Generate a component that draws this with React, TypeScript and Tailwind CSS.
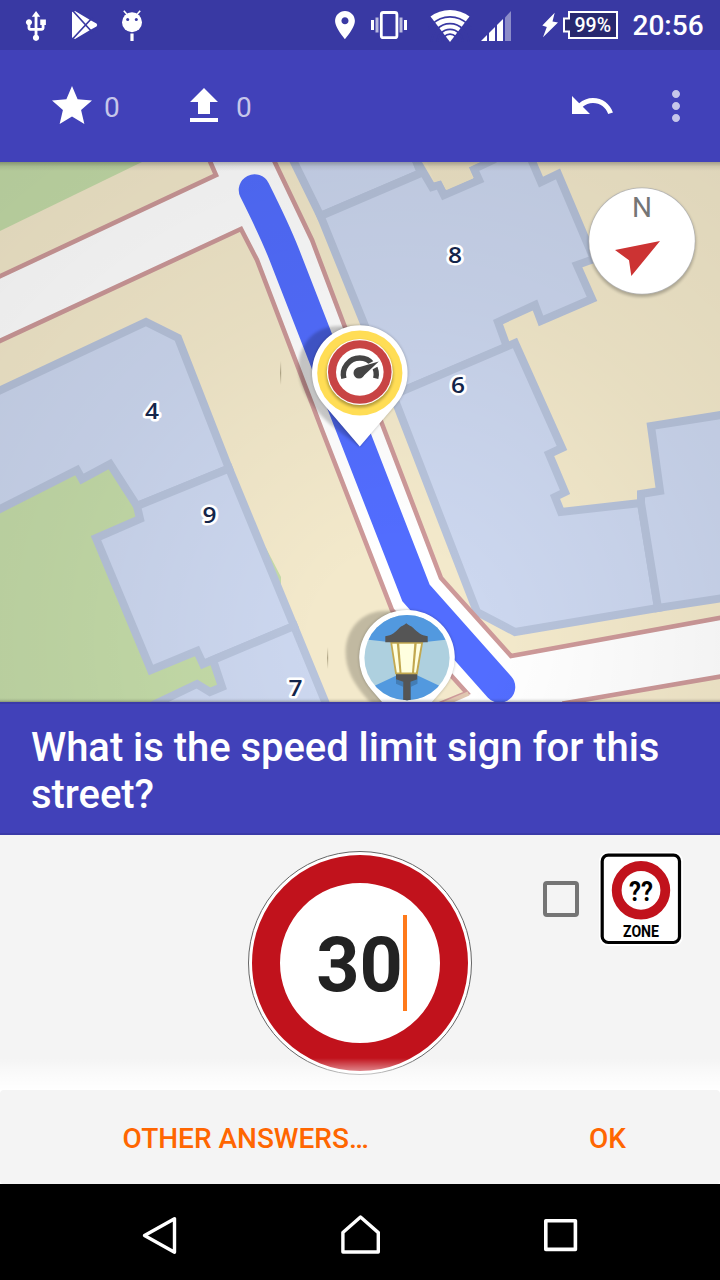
import React from "react";

const WALL = "#b7c3db";
const ROOF = "#ccd7ef";
const CURB = "#cd9999";

const buildings: string[] = [
  "293,160 320.5,216 421,173 412,150 289,150",
  "320.5,216 421,173 415,158 432,187 439,185 444,195 479,180 474,169 493,160 515,145 525,145 541,182 558,174 594,259 577,265 592,299 541,321 535,305 498,322 507,347 393,395",
  "393,395 515,343 562,448 549,454 565,492 555,497 561,512 641,503 658,608 515,632 477,612",
  "730,413.5 651,426 660,491 641,494 641,503 658,608 730,597",
  "-10,395 146,322 178,338 229,468.5 137,506 110,464 82,479 77,470 -10,514",
  "137,506 229,468.5 294,626 203,664 197,651 151,670 96,538 140,519",
  "213,660 294,626 331,716 130,716 197,684 210,692 222,687",
];

const houseNumbers = [
  { n: "8", x: 455, y: 263 },
  { n: "6", x: 458, y: 393.3 },
  { n: "4", x: 152, y: 418.5 },
  { n: "9", x: 209.5, y: 523 },
  { n: "7", x: 295.5, y: 696 },
];

function PinBody() {
  return (
    <>
      <path
        d="M0 73 C-16 62 -42 46 -56 18 C-70 -12 -56 -47 -20 -47 L6 -46 Z"
        fill="#000"
        opacity="0.2"
        filter="url(#soft)"
      />
      <path
        d="M0 73.5 L-35.5 32 A47.8 47.8 0 1 1 35.5 32 Z"
        fill="#000"
        opacity="0.25"
        filter="url(#soft)"
      />
      <path d="M0 73.5 L-35.5 32 A47.8 47.8 0 1 1 35.5 32 Z" fill="#fff" />
    </>
  );
}

function SpeedPin() {
  return (
    <g transform="translate(359.8 373)">
      <PinBody />
      <circle r="42.6" fill="#ffdd55" />
      <circle cy="1" r="33.5" fill="#000" opacity="0.3" filter="url(#soft)" />
      <circle cy="-1" r="33" fill="#fff" />
      <circle cy="-1" r="31.8" fill="#c84444" />
      <circle cy="-1" r="23.8" fill="#fff" />
      <path d="M-15.9 5.4 A16.4 16.4 0 1 1 15.9 5.4" fill="none" stroke="#444" strokeWidth="5.4" />
      <path d="M-1 0 L20 -11.5" stroke="#fff" strokeWidth="7" />
      <path d="M-3.5 -5 L19 -11.6 L2.5 4 Z" fill="#444" />
      <circle cx="-0.8" cy="0" r="5.5" fill="#444" />
    </g>
  );
}

function LampPin() {
  return (
    <g transform="translate(407 657.7)">
      <PinBody />
      <circle r="42.6" fill="#aed0df" />
      <g clipPath="url(#lampDisc)">
        <path d="M-44 -18.5 L-16 -15.5 H16 L44 -18.5 V-50 H-44 Z" fill="#5299df" />
        <path d="M-44 33.5 L-10 17.5 H10 L44 33.5 V50 H-44 Z" fill="#5299df" />
        <path d="M-11 19 H10.5 V24 L4 27 V45 H-4 V27 L-11 24 Z" fill="#000" opacity="0.18" transform="translate(0 2)" />
        <path d="M-11 16 H10.3 V21.5 L3.5 24 V44 H-3.7 V24 L-11 21.5 Z" fill="#555" />
      </g>
      <path d="M-16.8 -16 H16.2 L10.7 16.5 H-11.8 Z" fill="#c2a850" />
      <path d="M-14.7 -14 H-10.2 L-7.5 14.8 H-10.2 Z" fill="#ffffdf" />
      <path d="M-7.8 -14 H7.3 L5 14.8 H-5.5 Z" fill="#ffffdf" />
      <path d="M9.7 -14 H14 L9 14.8 H7 Z" fill="#ffffdf" />
      <path
        d="M-0.7 -34.5 C2 -32 4 -32 6 -30 C11 -25 14 -22.5 20.7 -21.5 V-15.5 H-21.7 V-21.5 C-15 -22.5 -12 -25 -7.5 -30 C-5.5 -32 -3.5 -32 -0.7 -34.5 Z"
        fill="#555"
      />
    </g>
  );
}

function MapView() {
  return (
    <svg className="block h-full w-full" viewBox="0 162 720 540">
      <defs>
        <radialGradient id="vignette" gradientUnits="userSpaceOnUse" cx="400" cy="640" r="700">
          <stop offset="0.12" stopColor="#000" stopOpacity="0" />
          <stop offset="0.5" stopColor="#000" stopOpacity="0.052" />
          <stop offset="1" stopColor="#000" stopOpacity="0.1" />
        </radialGradient>
        <linearGradient id="topShade" x1="0" x2="0" y1="0" y2="1">
          <stop offset="0" stopColor="#000" stopOpacity="0.26" />
          <stop offset="0.5" stopColor="#000" stopOpacity="0.07" />
          <stop offset="1" stopColor="#000" stopOpacity="0" />
        </linearGradient>
        <linearGradient id="tick" x1="0" x2="0" y1="0" y2="1">
          <stop offset="0" stopColor="#6b6040" stopOpacity="0" />
          <stop offset="0.5" stopColor="#6b6040" stopOpacity="0.5" />
          <stop offset="1" stopColor="#6b6040" stopOpacity="0" />
        </linearGradient>
        <filter id="soft" x="-30%" y="-30%" width="160%" height="160%">
          <feGaussianBlur stdDeviation="1.6" />
        </filter>
        <clipPath id="lampDisc">
          <circle r="42.6" />
        </clipPath>
      </defs>
      <rect y="162" width="720" height="540" fill="#f3e9cb" />
      <polygon points="0,162 142,162 0,231" fill="#c4dca8" />
      <polygon points="0,500 110,460 145,520 250,540 266,548 281,577 281,584 240,660 215,720 0,720" fill="#c4dba8" />
      {buildings.map((points) => (
        <polygon key={points} points={points} fill={ROOF} stroke={WALL} strokeWidth="8" />
      ))}
      <polygon points="425.5,158 434.5,182 441,180 446.5,190 473,178.5 468.5,167.5 489,158" fill="#f0e6c8" />
      <path
        d="M-10 281 L216 175 L205 150 H269 L312 240 L343 322 L441 578 L511 656 L730 616 V675 L560 704 H440 L467 693 L392 610 L322 430 L257 260 L241 229 L-10 345.5 Z"
        fill="#fff"
        stroke={CURB}
        strokeWidth="4.6"
      />
      <path d="M467 693.5 L444 703.5 L452 706 L480 706 Z" fill="#fff" />
      <path d="M468.5 693.5 L444 704" stroke="#e0c6b0" strokeWidth="4.5" />
      <path d="M477 695 L480 702 H559 L553 699 Z" fill="#fff" />
      <path d="M470 702 H562" stroke="#fff" strokeWidth="6" />
      <path
        d="M254.5 190 C266 213 275 231 284 254 L416 593 L499.5 687"
        fill="none"
        stroke="#526dff"
        strokeWidth="31.5"
        strokeLinecap="round"
      />
      <rect y="162" width="720" height="540" fill="url(#vignette)" />
      <rect x="280" y="361" width="1.2" height="24" fill="url(#tick)" />
      <rect x="327" y="647" width="1.2" height="22" fill="url(#tick)" />
      {houseNumbers.map((h) => (
        <text
          key={h.n}
          x={h.x}
          y={h.y}
          textAnchor="middle"
          fontSize="21.5"
          textLength="14"
          lengthAdjust="spacingAndGlyphs"
          fill="#14254a"
          stroke="#fff"
          strokeWidth="5"
          strokeLinejoin="round"
          paintOrder="stroke"
          className="font-['Open_Sans',sans-serif] font-semibold"
        >
          {h.n}
        </text>
      ))}
      <LampPin />
      <SpeedPin />
      <circle cx="642" cy="243" r="54" fill="#000" opacity="0.24" filter="url(#soft)" />
      <circle cx="642" cy="241" r="53.5" fill="#b4b4b4" />
      <circle cx="642" cy="241" r="52.8" fill="#fff" />
      <text x="642" y="217" textAnchor="middle" fontSize="28" fill="#757575" className="font-[Roboto,sans-serif]">
        N
      </text>
      <path d="M615 250 L660 241 L631.3 276 L629 260.3 Z" fill="#cc3333" />
      <rect y="162" width="720" height="9" fill="url(#topShade)" />
      <rect y="698" width="720" height="4" fill="url(#topShade)" transform="rotate(180 360 700)" />
    </svg>
  );
}

function StatusBar() {
  return (
    <div className="flex h-[50px] shrink-0 items-center bg-[#3939a3] text-white">
      <svg className="ml-6 h-[34px] w-6" viewBox="24 8 24 34" fill="#fff">
        <path
          transform="translate(19.1 9.6) scale(1.41)"
          d="M15 7v4h1v2h-3V5h2l-3-4-3 4h2v8H8v-2.07c.7-.37 1.2-1.08 1.2-1.93 0-1.21-.99-2.2-2.2-2.2-1.21 0-2.2.99-2.2 2.2 0 .85.5 1.56 1.2 1.93V13c0 1.11.89 2 2 2h3v3.05c-.71.37-1.2 1.1-1.2 1.95 0 1.22.99 2.2 2.2 2.2 1.21 0 2.2-.98 2.2-2.2 0-.85-.49-1.58-1.2-1.95V15h3c1.11 0 2-.89 2-2v-2h1V7h-4z"
        />
      </svg>
      <svg className="ml-[22px] h-[34px] w-7" viewBox="70 8 28 34">
        <path d="M72 12 L75 11 L91 20.5 L96.5 23.5 Q98 25 96.5 26.5 L91 29.5 L75 39 L72 37.5 Z" fill="#fff" />
        <path d="M73 11 L92.5 32.5 M73 38.5 L92.5 17.5" stroke="#3939a3" strokeWidth="1.7" />
      </svg>
      <svg className="ml-[22px] h-[34px] w-6" viewBox="120 8 24 34">
        <path d="M123.8 10.8 L128 15.5 M140.2 10.8 L136 15.5" stroke="#fff" strokeWidth="1.6" />
        <ellipse cx="132" cy="22.3" rx="10" ry="10" fill="#fff" />
        <circle cx="127.7" cy="19.5" r="1.5" fill="#3939a3" />
        <circle cx="136.3" cy="19.5" r="1.5" fill="#3939a3" />
        <rect x="130.4" y="33.5" width="3.2" height="7.5" fill="#fff" />
      </svg>
      <svg className="ml-[188px] h-[34px] w-[26px]" viewBox="332 8 26 34" fill="#fff">
        <path
          transform="translate(328 8.1) scale(1.415)"
          d="M12 2C8.13 2 5 5.13 5 9c0 5.25 7 13 7 13s7-7.75 7-13c0-3.87-3.13-7-7-7zm0 9.5c-1.38 0-2.5-1.12-2.5-2.5s1.12-2.5 2.5-2.5 2.5 1.12 2.5 2.5-1.12 2.5-2.5 2.5z"
        />
      </svg>
      <svg className="ml-3 h-[34px] w-10" viewBox="370 8 40 34" fill="#fff">
        <rect x="381.3" y="12.5" width="15.6" height="25.2" rx="2" fill="none" stroke="#fff" strokeWidth="2.8" />
        <rect x="371" y="20" width="3" height="10" />
        <rect x="404" y="20" width="3" height="10" />
        <rect x="375.5" y="17.5" width="3" height="15" opacity="0.65" />
        <rect x="399.5" y="17.5" width="3" height="15" opacity="0.65" />
      </svg>
      <svg className="ml-[18px] h-[34px] w-11" viewBox="428 8 44 34">
        <path d="M450 42 L430.5 16.5 A32.2 32.2 0 0 1 469.5 16.5 Z" fill="#fff" />
        <g fill="none" stroke="#3939a3" strokeWidth="1.8">
          <circle cx="450" cy="42" r="25.2" />
          <circle cx="450" cy="42" r="18.4" />
          <circle cx="450" cy="42" r="12.6" />
          <circle cx="450" cy="42" r="7.8" />
        </g>
      </svg>
      <svg className="ml-2 h-[34px] w-8" viewBox="480 8 32 34" fill="#fff">
        <path d="M481 41 L487 35 V41 Z" />
        <path d="M489 41 V33 L495 27 V41 Z" />
        <path d="M497 41 V25 L503 19 V41 Z" />
        <path d="M505 41 V17.5 L511 11 V41 Z" opacity="0.42" />
      </svg>
      <svg className="ml-7 h-[34px] w-20" viewBox="540 8 80 34">
        <path d="M554.7 12.7 L552.5 21.5 L558 22.5 L543 37.3 L546.8 27 L542.3 25.5 Z" fill="#fff" />
        <path d="M569 12 H617 V38 H569 V31.5 H564 V18.5 H569 Z" fill="#28286f" stroke="#fff" strokeWidth="2" />
        <text
          x="592.8"
          y="31.8"
          textAnchor="middle"
          fontSize="20"
          textLength="36.5"
          lengthAdjust="spacingAndGlyphs"
          fill="#fff"
          className="font-[Roboto,sans-serif] font-medium"
        >
          99%
        </text>
      </svg>
      <span className="ml-[12.5px] pt-0.5 font-[Roboto,sans-serif] text-[28px] leading-[34px] font-medium">20:56</span>
    </div>
  );
}

function Icon({ d, className = "" }: { d: string; className?: string }) {
  return (
    <svg className={`size-12 ${className}`} viewBox="0 0 24 24" fill="#fff">
      <path d={d} />
    </svg>
  );
}

function Toolbar() {
  return (
    <div className="flex h-28 shrink-0 items-center bg-[#4141b9] pr-5 pl-12 font-[Roboto,sans-serif] text-[28px] text-[#c6c6ea]">
      <button className="flex w-[132px] items-center gap-2">
        <Icon d="M12 17.27L18.18 21l-1.64-7.03L22 9.24l-7.19-.61L12 2 9.19 8.63 2 9.24l5.46 4.73L5.82 21z" />
        <span className="pt-[3px]">0</span>
      </button>
      <button className="flex items-center gap-2">
        <Icon d="M5 20h14v-2H5v2zM5 10h4v6h6v-6h4l-7-7z" />
        <span className="pt-[3px]">0</span>
      </button>
      <button className="mr-9 ml-auto">
        <Icon d="M12.5 8c-2.65 0-5.05.99-6.9 2.6L2 7v9h9l-3.62-3.62c1.39-1.16 3.16-1.88 5.12-1.88 3.54 0 6.55 2.31 7.6 5.5l2.37-.78C21.08 11.03 17.15 8 12.5 8z" />
      </button>
      <button>
        <Icon
          className="opacity-70"
          d="M12 8c1.1 0 2-.9 2-2s-.9-2-2-2-2 .9-2 2 .9 2 2 2zm0 2c-1.1 0-2 .9-2 2s.9 2 2 2 2-.9 2-2-.9-2-2-2zm0 6c-1.1 0-2 .9-2 2s.9 2 2 2 2-.9 2-2-.9-2-2-2z"
        />
      </button>
    </div>
  );
}

function AnswerForm() {
  return (
    <div className="relative flex h-[255px] shrink-0 justify-end bg-[#f4f4f4] pt-4">
      <div className="mr-[71px] flex size-56 items-center justify-center rounded-full border border-[#666] bg-white">
        <div className="flex size-[216px] items-center justify-center rounded-full border-[28px] border-[#c1121c] bg-white">
          <div className="flex items-center pl-[3px]">
            <span className="pt-[3px] font-[Roboto,sans-serif] text-[75.5px] leading-[96px] font-bold text-[#222]">30</span>
            <span className="h-24 w-1 bg-[#ff7a1a]" />
          </div>
        </div>
      </div>
      <div className="mr-[37px] flex items-start">
        <div className="mt-[30px] mr-5 size-9 rounded-[4px] border-4 border-[#757575]" />
        <svg className="mt-[1px] h-[94px] w-[84px]" viewBox="599 852 84 94">
          <rect x="599" y="852" width="84" height="94" rx="9" fill="#fff" />
          <rect x="602.2" y="855.2" width="77.3" height="87.3" rx="6" fill="#fff" stroke="#000" strokeWidth="3.2" />
          <circle cx="641" cy="890.3" r="24.3" fill="#fff" stroke="#c1121c" strokeWidth="9.8" />
          <text
            x="641"
            y="900.5"
            textAnchor="middle"
            fontSize="27"
            textLength="24"
            lengthAdjust="spacingAndGlyphs"
            className="font-[Roboto,sans-serif] font-bold"
          >
            ??
          </text>
          <text
            x="641"
            y="936.7"
            textAnchor="middle"
            fontSize="16.3"
            textLength="36"
            lengthAdjust="spacingAndGlyphs"
            className="font-[Roboto,sans-serif] font-bold"
          >
            ZONE
          </text>
        </svg>
      </div>
      <div className="absolute inset-x-0 bottom-0 h-8 bg-linear-to-b from-white/0 via-white/60 to-white" />
    </div>
  );
}

function NavBar() {
  return (
    <div className="flex h-24 shrink-0 items-center justify-center gap-40 bg-black pt-1.5">
      <svg className="size-10" viewBox="140 1215 40 40" fill="none" stroke="#fff" strokeWidth="3.4" strokeLinejoin="round">
        <path d="M144.5 1235.5 L174.5 1218.7 V1252.2 Z" />
      </svg>
      <svg className="size-10" viewBox="340 1215 40 40" fill="none" stroke="#fff" strokeWidth="3.4" strokeLinejoin="round">
        <path d="M360.5 1217 L378.3 1232.6 V1252 H342.9 V1232.6 Z" />
      </svg>
      <svg className="size-10" viewBox="540 1215 40 40" fill="none" stroke="#fff" strokeWidth="3.6" strokeLinejoin="round">
        <rect x="545.8" y="1220.8" width="29.6" height="28.6" />
      </svg>
    </div>
  );
}

export default function App() {
  return (
    <div className="flex h-[1280px] w-[720px] flex-col overflow-hidden bg-white">
      <StatusBar />
      <Toolbar />
      <div className="h-[540px] shrink-0">
        <MapView />
      </div>
      <div className="h-[133px] shrink-0 border-y-2 border-[#3a3aa8] bg-[#4141b9] px-[31px] pt-5 font-[Roboto,sans-serif] text-[40px] leading-[47px] font-medium tracking-[-0.04px] text-white">
        What is the speed limit sign for this street?
      </div>
      <AnswerForm />
      <div className="flex h-[94px] shrink-0 items-center rounded-sm bg-[#f4f4f4] pt-1 font-[Roboto,sans-serif] text-[28px] font-medium text-[#ff6600]">
        <button className="ml-[122.5px]">OTHER ANSWERS…</button>
        <button className="mr-[94px] ml-auto">OK</button>
      </div>
      <NavBar />
    </div>
  );
}
